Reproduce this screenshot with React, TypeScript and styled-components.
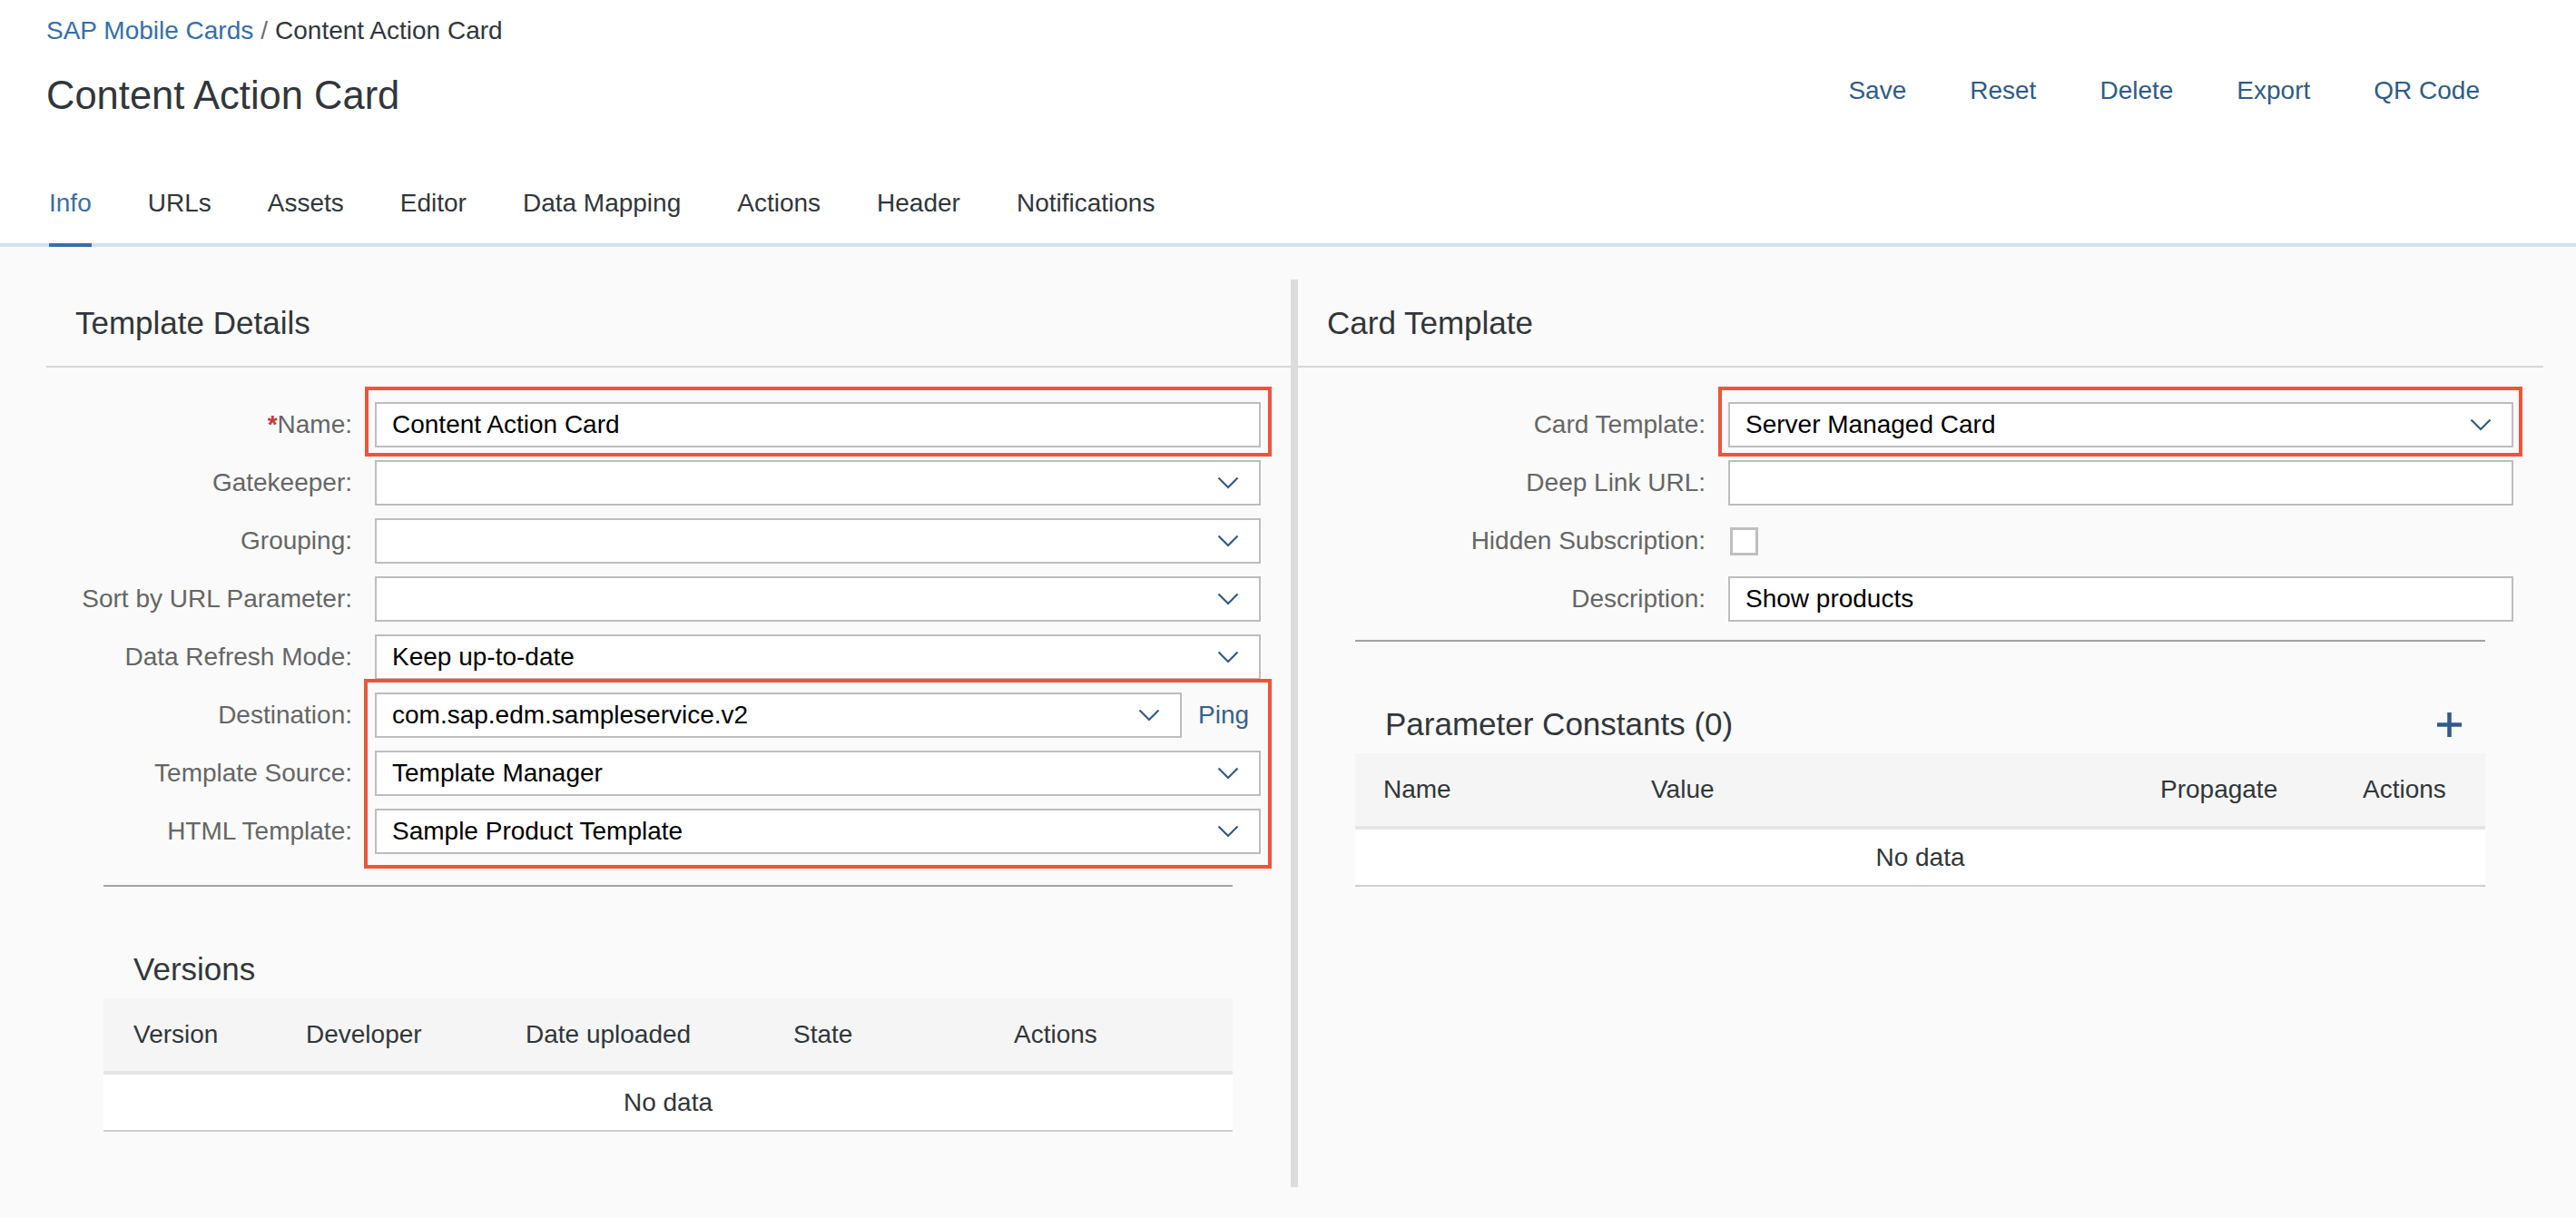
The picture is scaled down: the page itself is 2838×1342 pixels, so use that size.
import React from "react";
import styled, { createGlobalStyle } from "styled-components";

const GlobalStyle = createGlobalStyle`
  html, body {
    margin: 0;
    padding: 0;
  }
  body {
    background: #fafafa;
    font-family: "Liberation Sans", Arial, sans-serif;
    color: #32363a;
  }
  * {
    box-sizing: border-box;
  }
`;

const Page = styled.div`
  min-height: 1342px;
  background: #fafafa;
`;

const Header = styled.header`
  background: #ffffff;
  padding: 14px 0 0 51px;
  border-bottom: 4px solid #d3e0ee;
`;

const Breadcrumb = styled.div`
  font-size: 28px;
  line-height: 40px;
  color: #32363a;
`;

const CrumbLink = styled.span`
  color: #346fad;
`;

const CrumbSep = styled.span`
  color: #6a6d70;
  margin: 0 8px;
`;

const TitleRow = styled.div`
  display: flex;
  justify-content: space-between;
  align-items: flex-start;
  margin-top: 21px;
  padding-right: 106px;
`;

const Title = styled.h1`
  margin: 0;
  font-size: 43.5px;
  line-height: 60px;
  font-weight: normal;
  color: #32363a;
`;

const Actions = styled.div`
  display: flex;
  gap: 70px;
  margin-top: 5px;
`;

const ActionButton = styled.span`
  font-size: 28px;
  line-height: 40px;
  color: #2f5b89;
`;

const TabBar = styled.nav`
  display: flex;
  gap: 62px;
  margin: 69px 0 0 3px;
`;

const Tab = styled.span<{ $active?: boolean }>`
  font-size: 28px;
  line-height: 40px;
  padding-bottom: 24px;
  margin-bottom: -4px;
  border-bottom: 4px solid ${(p) => (p.$active ? "#3b6ea3" : "transparent")};
  color: ${(p) => (p.$active ? "#3b6ea3" : "#32363a")};
`;

const Content = styled.main`
  display: flex;
  padding: 36px 36px 34px 51px;
`;

const LeftPanel = styled.section`
  width: 1379px;
  height: 1000px;
  border-right: 8px solid #dcdcdc;
`;

const RightPanel = styled.section`
  flex: 1;
  height: 1000px;
`;

const PanelHeading = styled.h2`
  margin: 0;
  padding: 23px 0 22px 32px;
  border-bottom: 2px solid #d6d6d6;
  font-size: 35px;
  line-height: 50px;
  font-weight: normal;
  color: #32363a;
`;

const Form = styled.div`
  display: flex;
  flex-direction: column;
  gap: 14px;
  padding: 38px 33px 0 0;
`;

const FormRow = styled.div<{ $labelWidth: number }>`
  display: grid;
  grid-template-columns: ${(p) => p.$labelWidth}px 1fr;
  column-gap: 25px;
  align-items: center;
  height: 50px;
`;

const Label = styled.label`
  font-size: 28px;
  line-height: 40px;
  color: #666666;
  text-align: right;
  white-space: nowrap;
`;

const Required = styled.span`
  color: #c8393a;
  font-weight: bold;
`;

const Highlight = styled.div<{ $t: number; $r: number; $b: number; $l: number }>`
  position: relative;
  &::after {
    content: "";
    position: absolute;
    top: ${(p) => p.$t}px;
    right: ${(p) => p.$r}px;
    bottom: ${(p) => p.$b}px;
    left: ${(p) => p.$l}px;
    border: 4px solid #ef5439;
    pointer-events: none;
  }
`;

const RowGroup = styled(Highlight)`
  display: flex;
  flex-direction: column;
  gap: 14px;
`;

const TextBox = styled.div`
  height: 50px;
  display: flex;
  align-items: center;
  justify-content: space-between;
  padding: 0 22px 0 17px;
  background: #ffffff;
  border: 2px solid #bdbdbd;
  font-size: 28px;
  color: #000000;
  white-space: nowrap;
  overflow: hidden;
`;

const SelectBox = styled(TextBox)`
  flex: 1;
`;

const Chevron = styled.svg`
  width: 24px;
  height: 14px;
  flex-shrink: 0;
`;

const InlineField = styled.div`
  display: flex;
  align-items: center;
`;

const PingLink = styled.span`
  width: 87px;
  padding-left: 18px;
  font-size: 28px;
  color: #35618d;
`;

const Checkbox = styled.span`
  display: block;
  width: 31px;
  height: 31px;
  margin-left: 2px;
  background: #ffffff;
  border: 3px solid #bfbfbf;
`;

const SubSection = styled.div<{ $gap: number }>`
  margin: ${(p) => p.$gap}px 64px 0 63px;
  border-top: 2px solid #a2a2a2;
`;

const SubHead = styled.div`
  display: flex;
  justify-content: space-between;
  align-items: center;
  margin-top: 66px;
  height: 50px;
  padding: 0 25px 0 33px;
  font-size: 35px;
  color: #32363a;
`;

const PlusIcon = styled.svg`
  width: 29px;
  height: 29px;
`;

const Table = styled.div`
  margin-top: 7px;
`;

const HeadRow = styled.div<{ $cols: string; $pad: number }>`
  display: grid;
  grid-template-columns: ${(p) => p.$cols};
  align-items: center;
  height: 84px;
  padding-left: ${(p) => p.$pad}px;
  background: #f5f5f5;
  border-bottom: 4px solid #e5e5e5;
  font-size: 28px;
  color: #32363a;
`;

const EmptyRow = styled.div`
  display: flex;
  align-items: center;
  justify-content: center;
  height: 63px;
  background: #ffffff;
  border-bottom: 2px solid #cfcfcf;
  font-size: 28px;
  color: #32363a;
`;

const ChevronDown = () => (
  <Chevron viewBox="0 0 24 14">
    <path d="M1.5 1.5 L12 12 L22.5 1.5" fill="none" stroke="#2f5b89" strokeWidth="2.2" />
  </Chevron>
);

const Select = ({ value }: { value?: string }) => (
  <SelectBox>
    <span>{value}</span>
    <ChevronDown />
  </SelectBox>
);

const LEFT_LABEL = 337;
const RIGHT_LABEL = 449;

const tabs = ["Info", "URLs", "Assets", "Editor", "Data Mapping", "Actions", "Header", "Notifications"];
const actions = ["Save", "Reset", "Delete", "Export", "QR Code"];

function App() {
  return (
    <Page>
      <GlobalStyle />
      <Header>
        <Breadcrumb>
          <CrumbLink>SAP Mobile Cards</CrumbLink>
          <CrumbSep>/</CrumbSep>
          Content Action Card
        </Breadcrumb>
        <TitleRow>
          <Title>Content Action Card</Title>
          <Actions>
            {actions.map((a) => (
              <ActionButton key={a}>{a}</ActionButton>
            ))}
          </Actions>
        </TitleRow>
        <TabBar>
          {tabs.map((t, i) => (
            <Tab key={t} $active={i === 0}>
              {t}
            </Tab>
          ))}
        </TabBar>
      </Header>

      <Content>
        <LeftPanel>
          <PanelHeading>Template Details</PanelHeading>
          <Form>
            <FormRow $labelWidth={LEFT_LABEL}>
              <Label>
                <Required>*</Required>Name:
              </Label>
              <Highlight $t={-17} $r={-12} $b={-10} $l={-11}>
                <TextBox>Content Action Card</TextBox>
              </Highlight>
            </FormRow>
            <FormRow $labelWidth={LEFT_LABEL}>
              <Label>Gatekeeper:</Label>
              <Select />
            </FormRow>
            <FormRow $labelWidth={LEFT_LABEL}>
              <Label>Grouping:</Label>
              <Select />
            </FormRow>
            <FormRow $labelWidth={LEFT_LABEL}>
              <Label>Sort by URL Parameter:</Label>
              <Select />
            </FormRow>
            <FormRow $labelWidth={LEFT_LABEL}>
              <Label>Data Refresh Mode:</Label>
              <Select value="Keep up-to-date" />
            </FormRow>
            <RowGroup $t={-15} $r={-12} $b={-16} $l={LEFT_LABEL + 25 - 12}>
              <FormRow $labelWidth={LEFT_LABEL}>
                <Label>Destination:</Label>
                <InlineField>
                  <Select value="com.sap.edm.sampleservice.v2" />
                  <PingLink>Ping</PingLink>
                </InlineField>
              </FormRow>
              <FormRow $labelWidth={LEFT_LABEL}>
                <Label>Template Source:</Label>
                <Select value="Template Manager" />
              </FormRow>
              <FormRow $labelWidth={LEFT_LABEL}>
                <Label>HTML Template:</Label>
                <Select value="Sample Product Template" />
              </FormRow>
            </RowGroup>
          </Form>

          <SubSection $gap={34}>
            <SubHead>
              <span>Versions</span>
            </SubHead>
            <Table>
              <HeadRow $cols="190px 242px 295px 243px 1fr" $pad={33}>
                <span>Version</span>
                <span>Developer</span>
                <span>Date uploaded</span>
                <span>State</span>
                <span>Actions</span>
              </HeadRow>
              <EmptyRow>No data</EmptyRow>
            </Table>
          </SubSection>
        </LeftPanel>

        <RightPanel>
          <PanelHeading>Card Template</PanelHeading>
          <Form>
            <FormRow $labelWidth={RIGHT_LABEL}>
              <Label>Card Template:</Label>
              <Highlight $t={-17} $r={-10} $b={-10} $l={-11}>
                <Select value="Server Managed Card" />
              </Highlight>
            </FormRow>
            <FormRow $labelWidth={RIGHT_LABEL}>
              <Label>Deep Link URL:</Label>
              <TextBox />
            </FormRow>
            <FormRow $labelWidth={RIGHT_LABEL}>
              <Label>Hidden Subscription:</Label>
              <Checkbox />
            </FormRow>
            <FormRow $labelWidth={RIGHT_LABEL}>
              <Label>Description:</Label>
              <TextBox>Show products</TextBox>
            </FormRow>
          </Form>

          <SubSection $gap={20}>
            <SubHead>
              <span>Parameter Constants (0)</span>
              <PlusIcon viewBox="0 0 29 29">
                <path d="M14.5 1 V28 M1 14.5 H28" fill="none" stroke="#2f5b89" strokeWidth="4.5" />
              </PlusIcon>
            </SubHead>
            <Table>
              <HeadRow $cols="295px 561px 223px 1fr" $pad={31}>
                <span>Name</span>
                <span>Value</span>
                <span>Propagate</span>
                <span>Actions</span>
              </HeadRow>
              <EmptyRow>No data</EmptyRow>
            </Table>
          </SubSection>
        </RightPanel>
      </Content>
    </Page>
  );
}

export default App;
